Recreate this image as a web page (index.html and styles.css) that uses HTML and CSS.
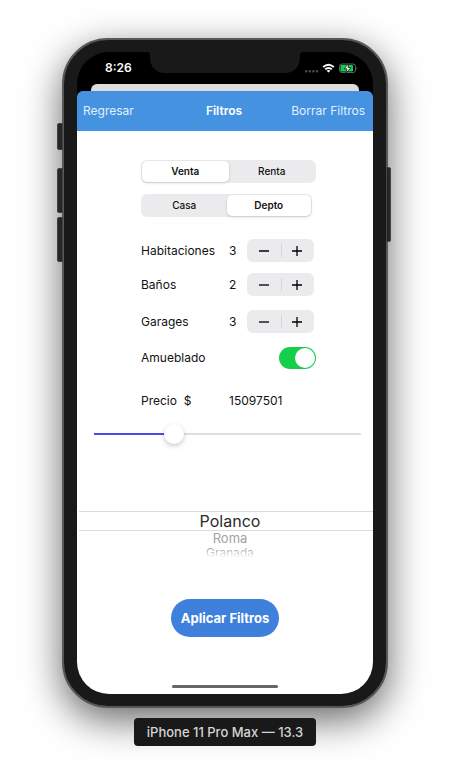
FILE: index.html
```html
<!DOCTYPE html>
<html lang="es">
<head>
<meta charset="utf-8">
<meta name="viewport" content="width=device-width, initial-scale=1">
<title>Filtros</title>
<link rel="stylesheet" href="styles.css">
</head>
<body>
<div class="phone">
  <span class="key key-mute"></span>
  <span class="key key-up"></span>
  <span class="key key-down"></span>
  <span class="key key-power"></span>
  <div class="screen">
    <div class="status">
      <svg class="notch" viewBox="0 0 156 21" aria-hidden="true"><path d="M0 0H156C153.500 0 153 1.500 153 4V5C153 15 147 21 138 21H18C9 21 3 15 3 5V4C3 1.500 2.500 0 0 0Z"/></svg>
      <span class="time">8:26</span>
      <svg class="signals" viewBox="0 0 54 12" aria-hidden="true">
        <g fill="#4a4a4a"><rect x="1" y="8" width="2.500" height="2.500" rx="1"/><rect x="4.600" y="8" width="2.500" height="2.500" rx="1"/><rect x="8.200" y="8" width="2.500" height="2.500" rx="1"/><rect x="11.800" y="8" width="2.500" height="2.500" rx="1"/></g>
        <g fill="none" stroke="#fff" stroke-width="1.900"><path d="M19.200 5Q24.500 0.400 29.800 5"/><path d="M21.200 7.300Q24.500 4.500 27.800 7.300"/></g>
        <path d="M22.600 8.700Q24.500 7.300 26.400 8.700L24.500 10.600Z" fill="#fff"/>
        <rect x="35.500" y="2" width="16" height="8.500" rx="2.500" fill="none" stroke="#666"/>
        <rect x="36.500" y="3" width="12.500" height="6.500" rx="1.200" fill="#0fd04f"/>
        <path d="M52.500 4.700Q54 6.200 52.500 7.700Z" fill="#666"/>
        <path d="M45 1.500L40 6.800H43L42 11L47 5.600H44Z" fill="#fff" stroke="#000" stroke-width=".7"/>
      </svg>
    </div>
    <div class="back-sheet"></div>
    <header class="nav">
      <a class="nav-link" href="#">Regresar</a>
      <h1>Filtros</h1>
      <a class="nav-link nav-end" href="#">Borrar Filtros</a>
    </header>
    <main>
      <form class="filters">
        <div class="fields">
          <fieldset class="segmented">
            <label><input type="radio" name="operacion" checked><span>Venta</span></label>
            <label><input type="radio" name="operacion"><span>Renta</span></label>
          </fieldset>
          <fieldset class="segmented compact">
            <label><input type="radio" name="tipo"><span>Casa</span></label>
            <label><input type="radio" name="tipo" checked><span>Depto</span></label>
          </fieldset>
          <div class="row rooms">
            <span>Habitaciones</span><output>3</output>
            <div class="stepper">
              <button type="button" aria-label="Menos habitaciones"><svg viewBox="0 0 12 12"><path d="M1 6H11"/></svg></button>
              <button type="button" aria-label="Más habitaciones"><svg viewBox="0 0 12 12"><path d="M1 6H11M6 1V11"/></svg></button>
            </div>
          </div>
          <div class="row baths">
            <span>Baños</span><output>2</output>
            <div class="stepper">
              <button type="button" aria-label="Menos baños"><svg viewBox="0 0 12 12"><path d="M1 6H11"/></svg></button>
              <button type="button" aria-label="Más baños"><svg viewBox="0 0 12 12"><path d="M1 6H11M6 1V11"/></svg></button>
            </div>
          </div>
          <div class="row garages">
            <span>Garages</span><output>3</output>
            <div class="stepper">
              <button type="button" aria-label="Menos garages"><svg viewBox="0 0 12 12"><path d="M1 6H11"/></svg></button>
              <button type="button" aria-label="Más garages"><svg viewBox="0 0 12 12"><path d="M1 6H11M6 1V11"/></svg></button>
            </div>
          </div>
          <div class="furnished">
            <label for="amueblado">Amueblado</label>
            <input class="switch" id="amueblado" type="checkbox" role="switch" checked>
          </div>
          <div class="row price">
            <label for="precio">Precio&nbsp; $</label><output class="amount" for="precio">15097501</output>
          </div>
        </div>
        <input class="slider" id="precio" type="range" min="0" max="53000000" value="15097501">
        <ul class="picker" role="listbox" aria-label="Colonia">
          <li class="current" role="option" aria-selected="true">Polanco</li>
          <li class="near" role="option">Roma</li>
          <li class="far" role="option">Granada</li>
        </ul>
        <button class="apply" type="submit">Aplicar Filtros</button>
      </form>
      <div class="home"></div>
    </main>
  </div>
</div>
<p class="device">iPhone 11 Pro Max — 13.3</p>
</body>
</html>
```
FILE: styles.css
```css
* { box-sizing: border-box; }
body {
  margin: 0;
  padding: 38px 62px 36px;
  background: #fff;
  color: #111;
  font: 12px/16px Inter, "Liberation Sans", sans-serif;
}
.phone {
  position: relative;
  padding: 12px 13px;
  border: 2px solid #58585a;
  border-radius: 46px;
  background: #191919;
  box-shadow: 0 12px 38px rgba(0, 0, 0, .6);
}
.key {
  position: absolute;
  left: -7px;
  width: 6px;
  border: 1px solid #444;
  border-radius: 2px 0 0 2px;
  background: #262626;
}
.key-mute { top: 83px; height: 27px; }
.key-up { top: 128px; height: 45px; }
.key-down { top: 177px; height: 45px; }
.key-power { top: 127px; right: -5px; left: auto; width: 5px; height: 75px; border-radius: 0 2px 2px 0; }

.screen {
  overflow: hidden;
  border-radius: 32px;
  background: #000;
}
.status {
  position: relative;
  display: flex;
  align-items: center;
  justify-content: space-between;
  height: 32px;
  padding: 0 15px 0 28px;
  color: #fff;
}
.notch {
  position: absolute;
  top: 0;
  left: 50%;
  width: 156px;
  height: 21px;
  margin-left: -78px;
  fill: #191919;
}
.time { font-weight: 600; }
.signals { width: 54px; height: 12px; }
.back-sheet {
  height: 7px;
  margin: 0 14px;
  border-radius: 6px 6px 0 0;
  background: #dcdcdc;
}
.nav {
  display: grid;
  grid-template-columns: 1fr auto 1fr;
  align-items: center;
  height: 40px;
  padding: 0 8px 0 6px;
  border-radius: 6px 6px 0 0;
  background: #4592e1;
}
.nav h1 { margin: 0; color: #fff; font: inherit; font-weight: 600; }
.nav-link { color: #e3f0fc; text-decoration: none; white-space: nowrap; }
.nav-end { justify-self: end; }
main { padding: 29px 0 6px; background: #fff; }
.fields { padding: 0 57px 0 64px; }

.segmented {
  display: flex;
  min-width: 0;
  height: 23px;
  margin: 0 0 11px;
  padding: 1px;
  border: 0;
  border-radius: 6px;
  background: #ebebed;
  font-size: 10px;
  font-weight: 500;
}
.compact { margin: 0 4px 22px 0; }
.segmented label { position: relative; display: flex; flex: 1; }
.segmented input { position: absolute; opacity: 0; margin: 0; }
.segmented span { flex: 1; border-radius: 5px; line-height: 21px; text-align: center; }
.segmented input:checked + span {
  background: #fff;
  box-shadow: 0 1px 3px rgba(0, 0, 0, .16);
  font-weight: 600;
}
.row {
  display: grid;
  grid-template-columns: 1fr 18px 67px;
  align-items: center;
  padding-right: 2px;
}
.rooms { margin-bottom: 11px; }
.baths { margin-bottom: 14px; }
.garages { margin-bottom: 14px; }
.furnished { display: flex; align-items: center; justify-content: space-between; margin-bottom: 24px; }
.stepper {
  display: flex;
  height: 23px;
  border-radius: 6px;
  background: #ebebed;
}
.stepper button {
  display: flex;
  flex: 1;
  align-items: center;
  justify-content: center;
  padding: 0;
  border: 0;
  background: none;
}
.stepper button + button {
  background: linear-gradient(#d5d5d8, #d5d5d8) left center / 1px 13px no-repeat;
}
.stepper svg { width: 12px; height: 12px; fill: none; stroke: #000; stroke-width: 1.3; }
.switch {
  display: flex;
  justify-content: flex-end;
  width: 37px;
  height: 22px;
  margin: 0;
  padding: 1px;
  appearance: none;
  border-radius: 11px;
  background: #15cf4b;
}
.switch::before {
  content: "";
  width: 20px;
  height: 20px;
  border-radius: 50%;
  background: #fff;
}
.amount { grid-column: 2 / -1; }
.slider {
  display: block;
  width: calc(100% - 29px);
  height: 20px;
  margin: 15px 12px 67px 17px;
  appearance: none;
  background: linear-gradient(90deg, #4a48ee 30%, #dfdfe1 30%) center / 100% 2px no-repeat;
}
.slider::-webkit-slider-thumb {
  width: 20px;
  height: 20px;
  appearance: none;
  border-radius: 50%;
  background: #fff;
  box-shadow: 0 2px 5px rgba(0, 0, 0, .22);
}
.picker {
  height: 88px;
  margin: 0;
  padding: 0 0 0 2px;
  list-style: none;
  text-align: center;
}
.picker li { padding-left: 8px; }
.current {
  border: solid #dcdcdc;
  border-width: 1px 0;
  color: #2a2a2a;
  font-size: 16px;
  line-height: 18px;
}
.near { color: #a3a3a3; font-size: 13px; line-height: 14px; }
.far {
  background: linear-gradient(#aaa 30%, transparent 85%);
  background-clip: text;
  color: transparent;
  font-size: 12px;
  line-height: 15px;
}
.apply {
  display: block;
  margin: 0 auto;
  padding: 11px 10px;
  border: 0;
  border-radius: 19px;
  background: #3f80dc;
  color: #fff;
  font: 700 13px/16px Inter, "Liberation Sans", sans-serif;
}
.home {
  width: 36%;
  height: 3px;
  margin: 48px auto 0;
  border-radius: 2px;
  background: #666;
}
.device {
  position: relative;
  width: fit-content;
  margin: 10px auto 0;
  padding: 6px 13px;
  border-radius: 4px;
  background: #191919;
  color: #d5d5d5;
  font-size: 13px;
  font-weight: 500;
}
```
